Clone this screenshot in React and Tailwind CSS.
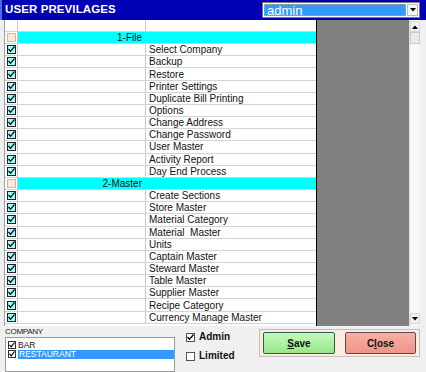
import React from 'react';

const rows = [
  { cat: '1-File' },
  { name: 'Select Company' },
  { name: 'Backup' },
  { name: 'Restore' },
  { name: 'Printer Settings' },
  { name: 'Duplicate Bill Printing' },
  { name: 'Options' },
  { name: 'Change Address' },
  { name: 'Change Password' },
  { name: 'User Master' },
  { name: 'Activity Report' },
  { name: 'Day End Process' },
  { cat: '2-Master' },
  { name: 'Create Sections' },
  { name: 'Store Master' },
  { name: 'Material Category' },
  { name: 'Material  Master' },
  { name: 'Units' },
  { name: 'Captain Master' },
  { name: 'Steward Master' },
  { name: 'Table Master' },
  { name: 'Supplier Master' },
  { name: 'Recipe Category' },
  { name: 'Currency Manage Master' },
];

const Check = ({ checked }) =>
  checked ? (
    <div className="w-[9px] h-[9px] border border-[#222] bg-[#9ff] flex items-center justify-center">
      <svg width="7" height="7" viewBox="0 0 7 7">
        <path d="M0.5 3 L2.5 5.3 L6.5 0.5" stroke="#111" strokeWidth="1.3" fill="none" />
      </svg>
    </div>
  ) : (
    <div className="w-[9px] h-[9px] border border-[#c8b8b0] bg-[#fde6dc]" />
  );

const Row = ({ row }) => (
  <div className="flex h-[12.17px] border-b border-[#d4d4d4]">
    <div className="w-[13px] shrink-0 flex items-center justify-center border-r border-[#c8c8c8] bg-white">
      <Check checked={!row.cat} />
    </div>
    <div
      className={`w-[128px] shrink-0 flex items-center justify-end pr-[3px] border-r border-[#c8c8c8] ${
        row.cat ? 'bg-[#00ffff] border-r-[#00ffff]' : 'bg-white'
      }`}
    >
      {row.cat}
    </div>
    <div className={`flex-1 flex items-center pl-[3px] whitespace-pre ${row.cat ? 'bg-[#00ffff]' : 'bg-white'}`}>
      {row.name}
    </div>
  </div>
);

const MiniCheck = () => (
  <div className="w-[8px] h-[8px] border border-[#333] bg-white flex items-center justify-center">
    <svg width="6" height="6" viewBox="0 0 6 6">
      <path d="M0.5 2.8 L2.2 4.8 L5.5 0.5" stroke="#000" strokeWidth="1.2" fill="none" />
    </svg>
  </div>
);

export default function App() {
  return (
    <div className="w-[426px] h-[372px] bg-[#f0f0f0] overflow-hidden flex flex-col font-['Liberation_Sans',Arial,sans-serif] text-[10px] text-[#111]">
      {/* Title */}
      <div className="h-[20px] shrink-0 bg-[#0000b4] flex items-center justify-between pl-[3px] pr-[6px] border-l-[2px] border-[#4a6ee0]">
        <span className="text-white font-bold text-[11.5px] tracking-[0.1px]">USER PREVILAGES</span>
        <div className="w-[158px] h-[16px] bg-white border border-[#7a7a7a] flex items-center p-[1px]">
          <div className="flex-1 h-full bg-[#3399ff] border border-dotted border-[#e0a060] flex items-center pl-[2px] text-white text-[13px] leading-none">
            admin
          </div>
          <div className="w-[11px] h-full flex items-center justify-center bg-[#f4f4f4] border border-[#bbb] ml-[1px]">
            <svg width="6" height="4" viewBox="0 0 6 4">
              <path d="M0 0 H6 L3 3.5 Z" fill="#000" />
            </svg>
          </div>
        </div>
      </div>

      {/* Grid */}
      <div className="h-[306px] shrink-0 flex ml-[4px] mr-[6px] border-l border-[#a0a0a0] bg-white">
        <div className="w-[312px] shrink-0 flex flex-col border-r border-black">
          <div className="flex h-[12px] border-b border-[#d4d4d4]">
            <div className="w-[13px] border-r border-[#c8c8c8]" />
            <div className="w-[128px] border-r border-[#c8c8c8]" />
            <div className="flex-1" />
          </div>
          {rows.map((r, i) => (
            <Row key={i} row={r} />
          ))}
        </div>
        <div className="flex-1 bg-[#808080]" />
        <div className="w-[11px] shrink-0 flex flex-col bg-[#f8f8f8] border-l border-[#e0e0e0]">
          <div className="h-[11px] mt-[1px] flex items-center justify-center bg-[#f0f0f0] border border-[#d8d8d8]">
            <svg width="6" height="4" viewBox="0 0 6 4">
              <path d="M0 4 H6 L3 0.5 Z" fill="#000" />
            </svg>
          </div>
          <div className="h-[12px] bg-[#eaeaea] border border-[#c8c8c8]" />
          <div className="flex-1" />
          <div className="h-[11px] mb-[2px] flex items-center justify-center bg-[#f0f0f0] border border-[#d8d8d8]">
            <svg width="6" height="4" viewBox="0 0 6 4">
              <path d="M0 0 H6 L3 3.5 Z" fill="#000" />
            </svg>
          </div>
        </div>
      </div>

      {/* Bottom */}
      <div className="flex-1 flex pl-[5px]">
        <div className="w-[170px] shrink-0 flex flex-col">
          <div className="text-[8px] leading-none mt-[2px] mb-[1px] text-[#222] tracking-[-0.3px]">COMPANY</div>
          <div className="flex-1 bg-white border border-[#9a9a9a] pt-[2px] text-[8.5px] leading-none">
            <div className="flex items-center h-[9.5px] pl-[2px] gap-[2px]">
              <MiniCheck />
              <span>BAR</span>
            </div>
            <div className="flex items-center h-[9.5px] pl-[2px] gap-[2px]">
              <MiniCheck />
              <span className="flex-1 h-full bg-[#3399ff] text-white flex items-center pl-[1px]">RESTAURANT</span>
            </div>
          </div>
        </div>
        <div className="w-[84px] shrink-0 flex flex-col pl-[11px] pt-[6px] gap-[9px] font-bold text-[10px] leading-none">
          <div className="flex items-center gap-[4px] h-[10px]">
            <div className="w-[9px] h-[9px] border border-[#555] bg-white flex items-center justify-center">
              <svg width="7" height="7" viewBox="0 0 7 7">
                <path d="M0.5 3 L2.5 5.3 L6.5 0.5" stroke="#000" strokeWidth="1.3" fill="none" />
              </svg>
            </div>
            <span>Admin</span>
          </div>
          <div className="flex items-center gap-[4px] h-[10px]">
            <div className="w-[9px] h-[9px] border border-[#555] bg-white" />
            <span>Limited</span>
          </div>
        </div>
        <div className="mt-[3px] w-[161px] h-[28px] bg-[#fbece0] border border-[#c8c0b8] flex items-center gap-[10px] px-[3px]">
          <button className="w-[72px] h-[22px] rounded-[2px] border border-[#2e5a5a] bg-gradient-to-b from-[#c4fab8] to-[#96e68a] font-bold text-[10px]">
            <span className="underline">S</span>ave
          </button>
          <button className="w-[71px] h-[22px] rounded-[2px] border border-[#5a4a5a] bg-gradient-to-b from-[#f8b0a4] to-[#ee9488] font-bold text-[10px]">
            C<span className="underline">l</span>ose
          </button>
        </div>
      </div>
    </div>
  );
}
